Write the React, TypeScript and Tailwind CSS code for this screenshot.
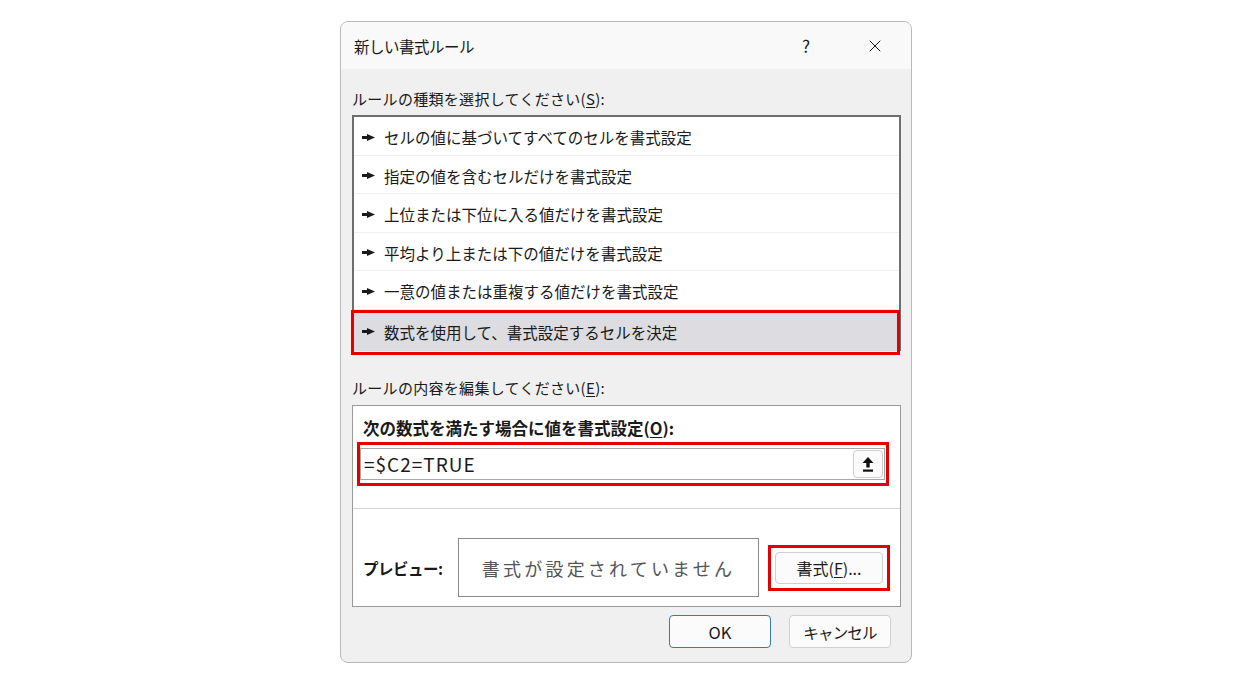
import { X } from "lucide-react"

const rules = [
  "セルの値に基づいてすべてのセルを書式設定",
  "指定の値を含むセルだけを書式設定",
  "上位または下位に入る値だけを書式設定",
  "平均より上または下の値だけを書式設定",
  "一意の値または重複する値だけを書式設定",
  "数式を使用して、書式設定するセルを決定",
]

function Pointer() {
  return (
    <svg width="13" height="7" viewBox="0 0 13 7" className="shrink-0 mt-[3px]">
      <rect x="0" y="2" width="7" height="3" fill="#1a1a1a" />
      <polygon points="5,0 13,3.5 5,7" fill="#1a1a1a" />
    </svg>
  )
}

function UploadIcon() {
  return (
    <svg width="12" height="15" viewBox="0 0 12 15">
      <polygon points="6,0 11.5,6 0.5,6" fill="#111" />
      <rect x="4.3" y="5" width="3.4" height="5.5" fill="#111" />
      <rect x="1" y="12.5" width="10" height="2.2" fill="#111" />
    </svg>
  )
}

export default function App() {
  return (
    <div className="w-[1253px] h-[684px] bg-white pt-[21px] pl-[340px] font-['Noto_Sans_CJK_JP','Noto_Sans',sans-serif] text-[#1a1a1a]">
      <div className="w-[572px] h-[642px] rounded-[8px] border border-[#b9b9b9] bg-[#f0f0f0] overflow-hidden flex flex-col">
        {/* title bar */}
        <div className="h-[47px] bg-[#f9f9f9] flex items-center pl-[13px] pr-[26px]">
          <span className="text-[15.5px] leading-[20px] tracking-[-0.5px]">新しい書式ルール</span>
          <span className="ml-auto text-[17px] leading-[20px] mr-[55px]">?</span>
          <X size={20} strokeWidth={1.2} />
        </div>

        <div className="px-[11px] flex flex-col">
          <div className="mt-[20px] h-[20px] text-[15px] leading-[20px] tracking-[0.3px]">
            ルールの種類を選択してください(<span className="underline underline-offset-2">S</span>):
          </div>

          {/* rule list */}
          <div className="mt-[6px] w-[549px] h-[236px] bg-white border-2 border-[#6e6e6e]">
            {rules.map((r, i) => {
              const selected = i === rules.length - 1
              return (
                <div
                  key={r}
                  className={
                    selected
                      ? "relative h-[41px] flex items-center gap-[9px] pl-[8px] bg-[#dcdce1]"
                      : "h-[38.5px] flex items-center gap-[9px] pl-[8px] border-b border-[#efefef]"
                  }
                >
                  <Pointer />
                  <span className="text-[15.5px] leading-[20px] pt-[3px]">{r}</span>
                  {selected && (
                    <div className="absolute -left-[3px] -right-[1px] top-0 -bottom-[4px] border-[3px] border-[#e50000]" />
                  )}
                </div>
              )
            })}
          </div>

          <div className="mt-[27px] h-[20px] text-[15px] leading-[20px] tracking-[0.3px]">
            ルールの内容を編集してください(<span className="underline underline-offset-2">E</span>):
          </div>

          {/* edit group */}
          <div className="mt-[7px] w-[549px] h-[202px] bg-white border border-[#9a9a9a] flex flex-col">
            <div className="mt-[12px] ml-[10px] h-[20px] text-[16.5px] leading-[20px] font-bold">
              次の数式を満たす場合に値を書式設定(<span className="underline underline-offset-2">O</span>):
            </div>
            <div className="mt-[4px] ml-[4px] w-[532px] h-[44px] border-[3px] border-[#e50000] py-[3px] pr-[1px]">
              <div className="h-[32px] border border-[#a8a8a8] bg-white flex items-center pl-[3px] pr-[1px]">
                <span className="text-[19px] leading-[20px] tracking-[1px]">=$C2=TRUE</span>
                <div className="ml-auto w-[30px] h-[28px] rounded-[4px] border border-[#d0d0d0] bg-[#fbfbfb] flex items-center justify-center">
                  <UploadIcon />
                </div>
              </div>
            </div>
            <div className="mt-[22px] border-t border-[#d4d4d4]" />
            <div className="flex items-center mt-[29px] pl-[10px]">
              <span className="w-[95px] text-[15.5px] leading-[20px] font-bold tracking-[-0.5px]">プレビュー:</span>
              <div className="w-[301px] h-[59px] border border-[#8a8a8a] flex items-center justify-center">
                <span className="text-[18px] leading-[20px] tracking-[3.2px] text-[#555]">書式が設定されていません</span>
              </div>
              <div className="ml-[9px] w-[122px] h-[46px] border-[3px] border-[#e50000] p-[4px]">
                <div className="h-full rounded-[4px] border border-[#d0d0d0] bg-[#fbfbfb] flex items-center justify-center">
                  <span className="text-[16px] leading-[20px]">
                    書式(<span className="underline underline-offset-2">F</span>)...
                  </span>
                </div>
              </div>
            </div>
          </div>

          {/* dialog buttons */}
          <div className="mt-[8px] flex justify-end gap-[18px] pr-[9px]">
            <div className="w-[102px] h-[33px] rounded-[4px] border border-[#3b78b5] bg-[#fbfbfb] flex items-center justify-center text-[16.5px] leading-[20px]">
              OK
            </div>
            <div className="w-[102px] h-[33px] rounded-[4px] border border-[#d0d0d0] bg-[#fbfbfb] flex items-center justify-center text-[15.5px] leading-[20px] tracking-[-0.8px]">
              キャンセル
            </div>
          </div>
        </div>
      </div>
    </div>
  )
}
